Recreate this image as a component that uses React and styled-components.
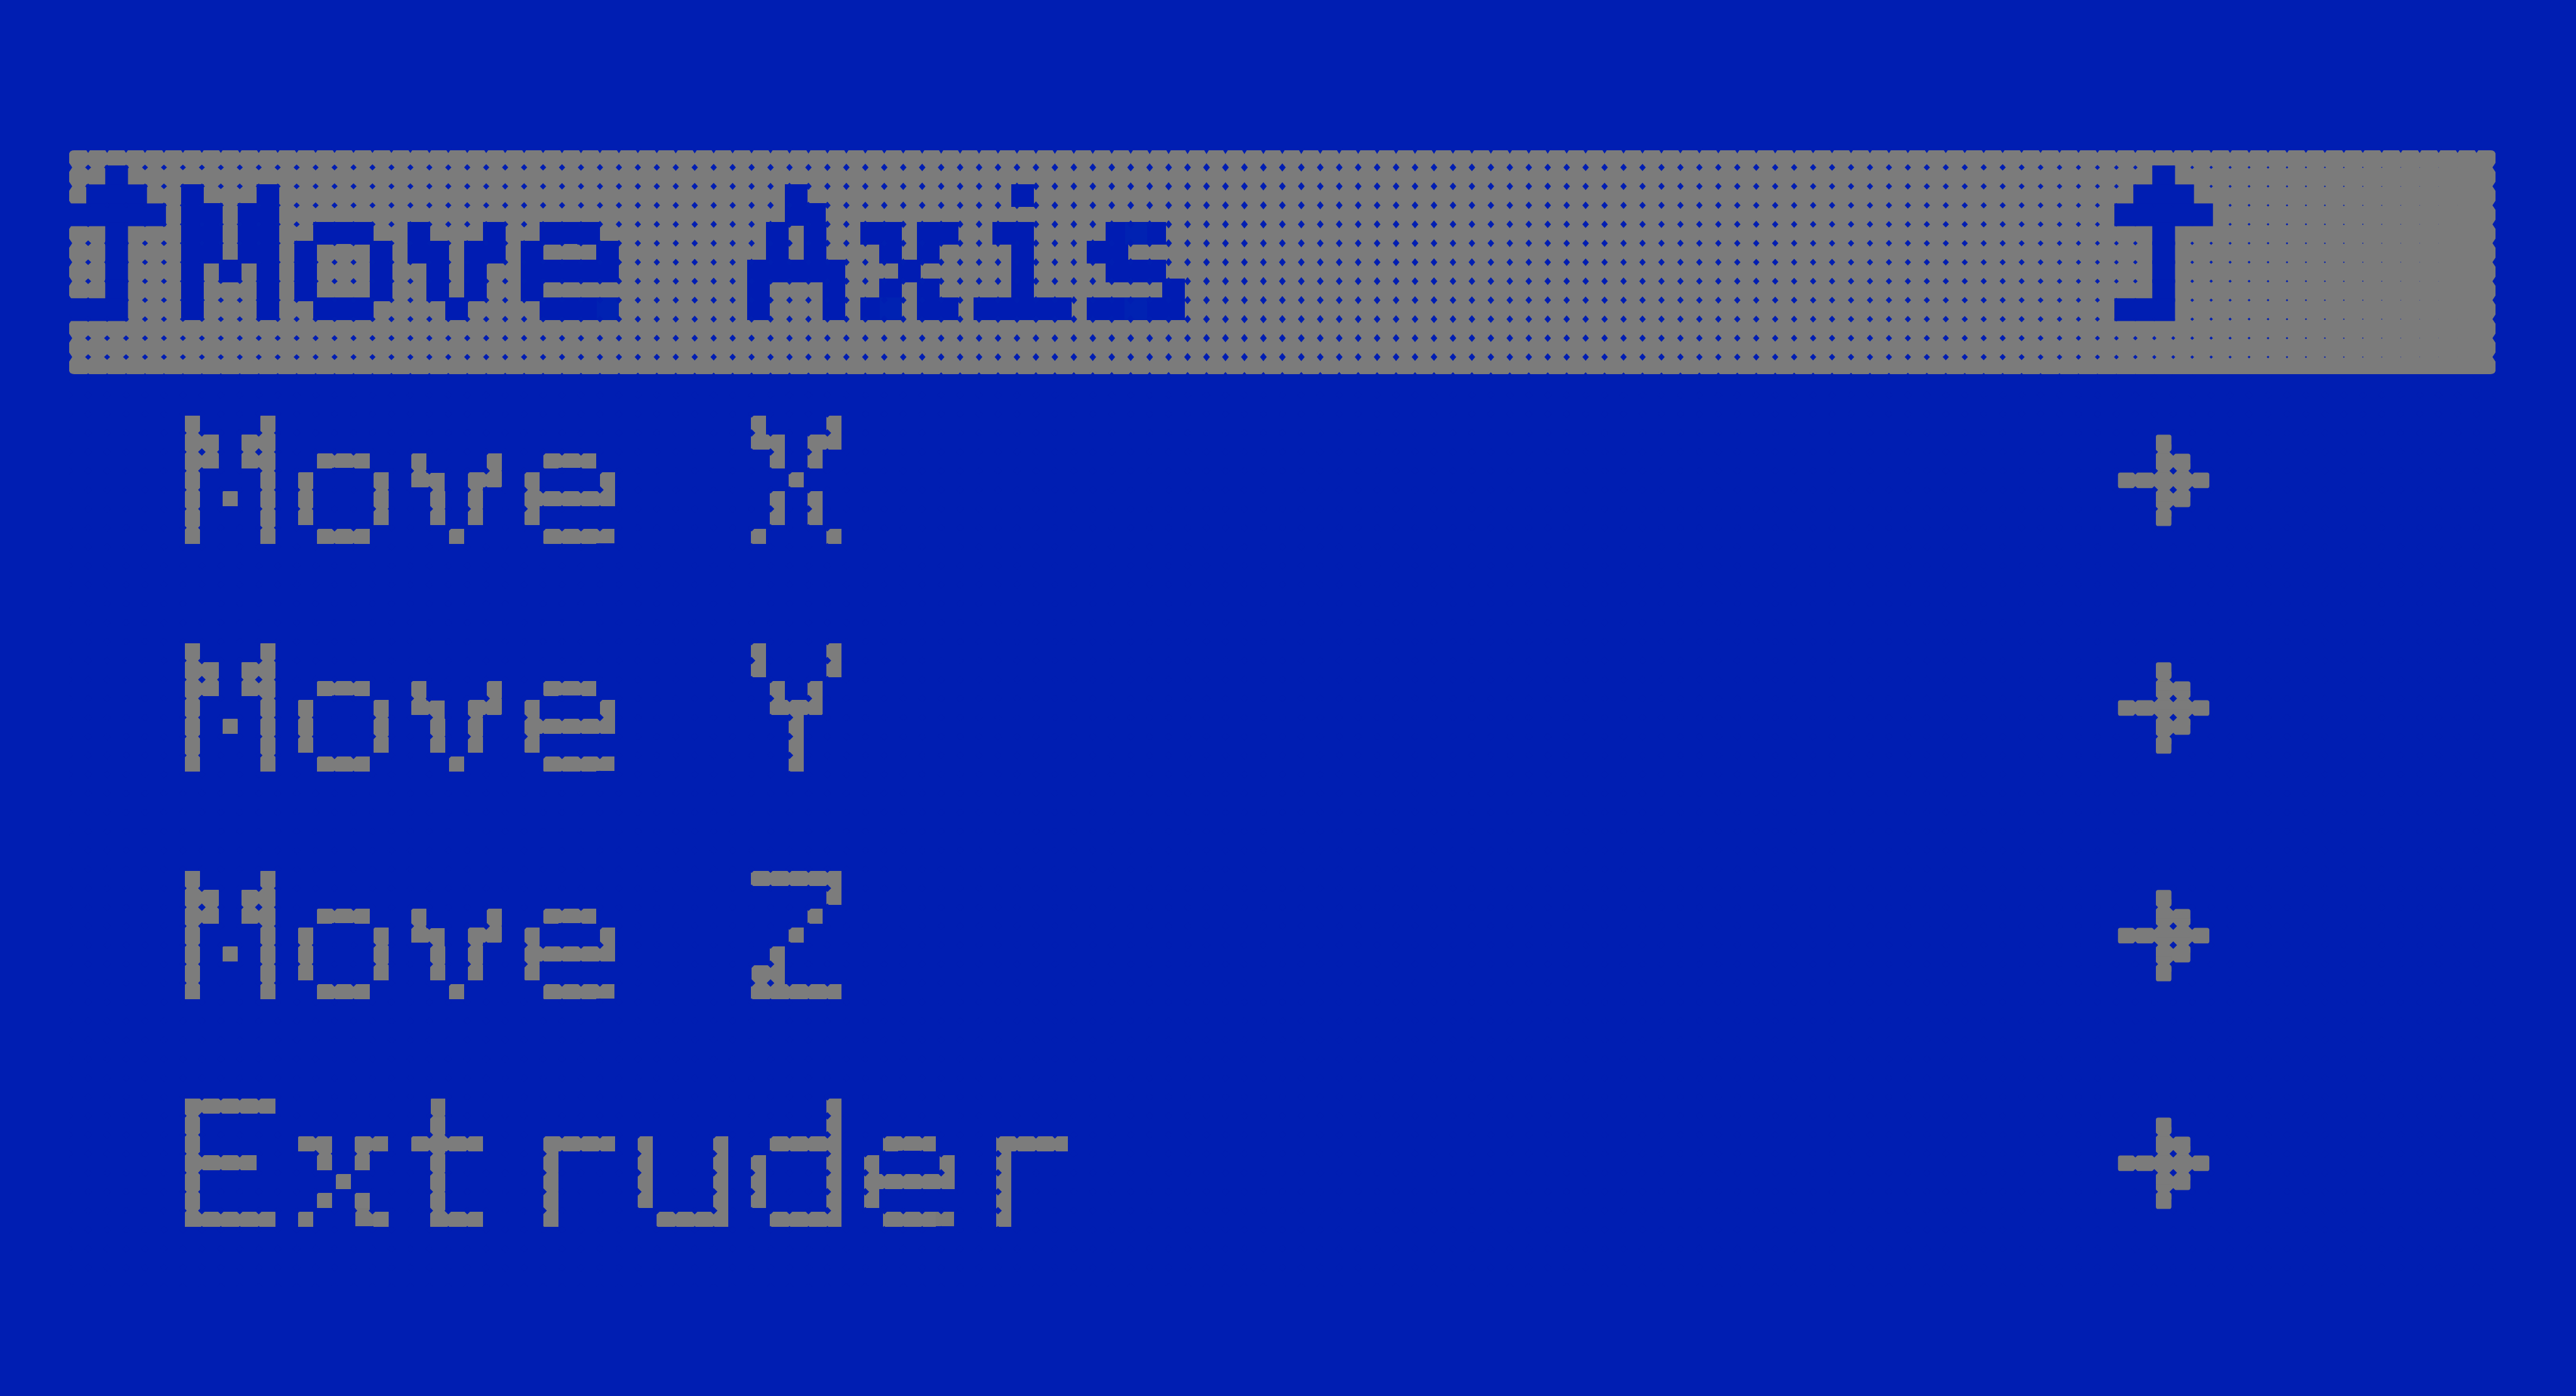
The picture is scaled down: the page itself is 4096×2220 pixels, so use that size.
import React from "react";
import styled, { createGlobalStyle } from "styled-components";

const BLUE = "#001eb2";
const GREY = "#7b7b7b";
const COLS = 128;
const ROWS = 12;

const Global = createGlobalStyle`
  * { box-sizing: border-box; }
  body { margin: 0; background: ${BLUE}; }
`;

const Screen = styled.main`
  min-height: 100vh;
  padding: 236px 128px 0 110px;
  background: ${BLUE};
`;

const Menu = styled.ul`
  list-style: none;
  margin: 0;
  padding: 0;
`;

const Line = styled.button`
  position: relative;
  display: grid;
  grid-template-columns: minmax(0, 11fr) minmax(0, 205fr) minmax(0, 10fr) minmax(0, 30fr);
  width: 100%;
  padding: 0;
  border: 0;
  border-radius: 8px;
  background: ${(p) => (p.$selected ? GREY : BLUE)};
  color: ${(p) => (p.$selected ? BLUE : GREY)};
  background-clip: padding-box;
  border-top: 3px solid transparent;
  border-bottom: 3px solid transparent;
  text-align: left;
  cursor: pointer;
`;

const Label = styled.span`
  grid-column: 2;
  padding-top: 26px;
  font-family: "Liberation Mono", monospace;
  font-size: 300px;
  line-height: 330px;
  white-space: nowrap;
  filter: url(#${(p) => (p.$selected ? "cells" : "dots")});
`;

const Defs = styled.svg`
  display: block;
  width: 0;
  height: 0;
`;

const Glyph = styled.svg`
  grid-row: 1;
  grid-column: ${(p) => p.$column};
  width: ${(p) => (p.$column === 1 ? "91%" : "100%")};
  height: 100%;
  fill: currentColor;
`;

const Gaps = styled.svg`
  position: absolute;
  top: -3px;
  left: 0;
  width: 100%;
  height: calc(100% + 6px);
  fill: ${BLUE};
  pointer-events: none;
`;

// Each run is [column, row, length] in display dots.
const UP = [[2, 1, 1], [1, 2, 3], [0, 3, 5], [2, 4, 1], [2, 5, 1], [2, 6, 1], [2, 7, 1], [0, 8, 3]];
const RIGHT = [[2, 3, 1], [2, 4, 2], [0, 5, 5], [2, 6, 2], [2, 7, 1]];

function DotGlyph({ kind, column }) {
  const up = kind === "up";
  return (
    <Glyph $column={column} viewBox="0 0 5 11.8" preserveAspectRatio="none" overflow="visible" aria-hidden="true">
      {(up ? UP : RIGHT).map(([c, r, n]) =>
        up ? (
          <rect key={r} x={c - 0.1} y={r - 0.2} width={n + 0.2} height={1.2} />
        ) : (
          <g key={r}>
            <rect x={c + 0.09} y={r - 0.01} width={n - 0.18} height={0.82} rx={0.12} />
            {r < 7 && <rect x={2.09} y={r + 0.5} width={r === 4 || r === 5 ? 1.82 : 0.82} height={0.8} />}
          </g>
        )
      )}
    </Glyph>
  );
}

// Resolves type to the dots of the display: one sample per 30px cell, grown to
// a full cell so that neighbours join, then trimmed back to the size of a dot.
function DotFilter({ id, weight, grow, trim }) {
  return (
    <filter id={id} filterUnits="userSpaceOnUse" primitiveUnits="userSpaceOnUse" x="-15" y="-3" width="1800" height="362">
      <feMorphology in="SourceGraphic" operator="dilate" radius={weight} />
      <feComponentTransfer result="type">
        <feFuncA type="discrete" tableValues="0 1" />
      </feComponentTransfer>
      <feFlood x="-1" y="11" width="2" height="2" floodColor="#000" />
      <feComposite x="-15" y="-3" width="30" height="30" />
      <feTile result="samples" />
      <feComposite in="type" in2="samples" operator="in" />
      <feMorphology operator="dilate" radius={grow} />
      {trim && <feMorphology operator="erode" radius={trim} />}
    </filter>
  );
}

// The unlit corners between neighbouring dots; they close up towards the right edge of a lit line.
function gapSize(col, lit) {
  if (!lit) return [0.2, 0.2];
  const t = col / COLS;
  const fade = t < 0.8 ? 1 : Math.max(0, 1 - (t - 0.8) / 0.19);
  const swell = Math.max(0, 1 - Math.abs(t - 0.48) / 0.42);
  return [0.16 * fade + 0.02 * swell, 0.15 * fade + 0.07 * swell];
}

function gapPath(lit) {
  let d = "";
  for (let c = 0; c <= COLS; c += 1) {
    const [w, h] = gapSize(c, lit);
    for (let r = 0; r <= ROWS; r += 1) {
      const edge = lit && (c === 0 || c === COLS || r === 0);
      const x = edge ? Math.max(w, 0.16) : w;
      const y = edge ? Math.max(h + 0.08, 0.24) : h;
      d += `M${c - x} ${r}Q${c - x / 2} ${r - y / 2} ${c} ${r - y}Q${c + x / 2} ${r - y / 2} ${c + x} ${r}Q${c + x / 2} ${r + y / 2} ${c} ${r + y}Q${c - x / 2} ${r + y / 2} ${c - x} ${r}Z`;
    }
  }
  return d;
}

const LIT_GAPS = gapPath(true);
const UNLIT_GAPS = gapPath(false);

function MenuLine({ label, selected, glyph }) {
  return (
    <li>
      <Line type="button" $selected={selected}>
        {selected && <DotGlyph kind="up" column={1} />}
        <Label $selected={selected}>{label}</Label>
        <DotGlyph kind={glyph} column={3} />
        <Gaps viewBox={`0 0 ${COLS} ${ROWS}`} preserveAspectRatio="none" aria-hidden="true">
          <path d={selected ? LIT_GAPS : UNLIT_GAPS} />
        </Gaps>
      </Line>
    </li>
  );
}

const ITEMS = ["Move X", "Move Y", "Move Z", "Extruder"];

export default function App() {
  return (
    <>
      <Global />
      <Screen>
        <Defs aria-hidden="true">
          <DotFilter id="dots" weight="0 3" grow="14" trim="3" />
          <DotFilter id="cells" weight="2 3" grow="17" />
        </Defs>
        <Menu>
          <MenuLine label="Move Axis" selected glyph="up" />
          {ITEMS.map((item) => (
            <MenuLine key={item} label={item} glyph="right" />
          ))}
        </Menu>
      </Screen>
    </>
  );
}
